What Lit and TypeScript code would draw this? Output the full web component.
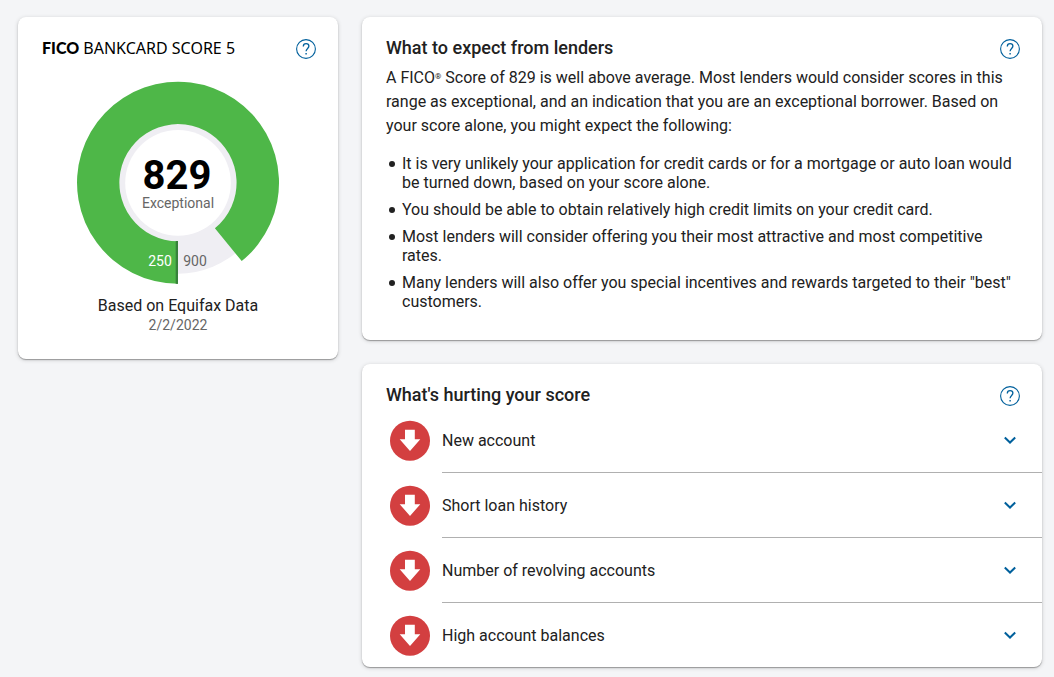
import { LitElement, html, css, svg } from "lit";
import { customElement, property, state } from "lit/decorators.js";

@customElement("help-button")
class HelpButton extends LitElement {
  @property() label = "Help";

  static styles = css`
    :host {
      display: block;
      flex: none;
    }
    .help {
      display: block;
      width: 24px;
      height: 24px;
      padding: 0;
      border: 0;
      background: none;
      color: #00609c;
      cursor: pointer;
    }
    .glyph {
      display: block;
    }
  `;

  render() {
    return html`<button class="help" type="button" aria-label=${this.label}>
      <svg class="glyph" width="24" height="24" viewBox="0 0 24 24" fill="none" stroke="currentColor">
        <circle cx="12" cy="12" r="9.4" stroke-width="1.1" />
        <path d="M9.3 9.4C9.3 7.6 10.4 6.6 12.1 6.6C13.8 6.6 14.9 7.6 14.9 9.1C14.9 11.4 12.1 11.5 12.1 14.3" stroke-width="1.3" />
        <path d="M12.1 16V17.5" stroke-width="1.4" />
      </svg>
    </button>`;
  }
}

@customElement("score-gauge")
class ScoreGauge extends LitElement {
  @property({ type: Number }) score = 829;
  @property() rating = "Exceptional";

  static styles = css`
    :host {
      display: block;
    }
    .gauge {
      display: block;
      margin: 0 auto;
      font-family: Roboto, sans-serif;
      text-anchor: middle;
    }
    .score {
      font-size: 40px;
      font-weight: 700;
      fill: #000;
    }
    .rating {
      font-size: 14px;
      fill: #666;
    }
    .low {
      font-size: 14px;
      fill: #fff;
    }
    .high {
      font-size: 14px;
      fill: #666;
    }
  `;

  render() {
    return html`<svg class="gauge" width="204" height="204" viewBox="0 0 204 204" role="img" aria-label="Score ${this.score}">
      ${svg`
        <circle cx="102" cy="101.7" r="91" fill="#efeef3" />
        <path fill="#4eb748" d="M102 202.7A101 101 0 1 1 165.7 180.1L138.9 147.2A58.6 58.6 0 1 0 102 160.3Z" />
        <rect x="99.7" y="160" width="2.3" height="42.8" fill="#37823a" />
        <circle cx="102" cy="101.9" r="52.8" fill="#fff" />
        <text class="score" x="101" y="108">${this.score}</text>
        <text class="rating" x="102" y="127">${this.rating}</text>
        <text class="low" x="84" y="185">250</text>
        <text class="high" x="119" y="185">900</text>
      `}
    </svg>`;
  }
}

@customElement("app-root")
class AppRoot extends LitElement {
  @state() private factors = [
    "New account",
    "Short loan history",
    "Number of revolving accounts",
    "High account balances",
  ];

  @state() private expectations = [
    "It is very unlikely your application for credit cards or for a mortgage or auto loan would be turned down, based on your score alone.",
    "You should be able to obtain relatively high credit limits on your credit card.",
    "Most lenders will consider offering you their most attractive and most competitive rates.",
    'Many lenders will also offer you special incentives and rewards targeted to their "best" customers.',
  ];

  static styles = css`
    :host {
      display: block;
      box-sizing: border-box;
      min-height: 100vh;
      background: #f4f5f7;
      color: #212121;
      font: 400 16px/24px Roboto, sans-serif;
    }
    .page {
      display: grid;
      grid-template-columns: 320px minmax(0, 1fr);
      align-items: start;
      gap: 24px;
      padding: 17px 12px 9px 18px;
    }
    .column {
      display: grid;
      gap: 24px;
    }
    .card {
      background: #fff;
      border-radius: 8px;
      box-shadow: 0 1px 1px rgba(0, 0, 0, 0.3), 0 1px 4px rgba(0, 0, 0, 0.18);
    }
    .head {
      display: flex;
      justify-content: space-between;
      align-items: flex-start;
      padding: 20px 20px 0 24px;
    }
    .title {
      margin: 0;
      font-size: 18px;
      font-weight: 500;
      line-height: 22px;
    }
    .product {
      margin: 0;
      color: #000;
      font: 400 16px/22px "Noto Sans", sans-serif;
    }
    .brand {
      font: 900 16px/22px Lato, sans-serif;
    }
    .summary {
      padding-bottom: 25px;
      text-align: center;
    }
    .gauge {
      margin: 20px 0 11px;
    }
    .source {
      margin: 0;
      line-height: 20px;
    }
    .date {
      margin: 0;
      color: #666;
      font-size: 14px;
      line-height: 18px;
    }
    .intro {
      margin: 0;
      padding: 5px 24px 0;
    }
    .mark {
      font-size: 8px;
      line-height: 8px;
      vertical-align: 4px;
    }
    .points {
      display: grid;
      gap: 8px;
      margin: 0;
      padding: 16px 24px 29px 27px;
      line-height: 19px;
      list-style: none;
    }
    .point {
      display: flex;
      gap: 7px;
    }
    .point::before {
      content: "";
      flex: none;
      width: 6px;
      height: 6px;
      margin-top: 7px;
      border-radius: 50%;
      background: currentColor;
    }
    .factors {
      margin: 0;
      padding: 0;
      list-style: none;
    }
    .factor {
      display: flex;
      align-items: flex-start;
      gap: 12px;
      width: 100%;
      padding: 0 0 0 28px;
      border: 0;
      background: none;
      color: inherit;
      font: inherit;
      text-align: left;
      cursor: pointer;
    }
    .arrow {
      flex: none;
      margin-top: 12px;
    }
    .line {
      display: flex;
      flex: 1;
      align-items: center;
      justify-content: space-between;
      height: 64px;
      padding-right: 20px;
      border-bottom: 1px solid #b0b0b0;
    }
    .name {
      padding-top: 2px;
    }
    .item:last-child .line {
      border-bottom: 0;
    }
  `;

  render() {
    return html`<main class="page">
      <section class="card summary">
        <header class="head">
          <h2 class="product"><span class="brand">FICO</span> BANKCARD SCORE 5</h2>
          <help-button label="About this score"></help-button>
        </header>
        <score-gauge class="gauge" score="829"></score-gauge>
        <p class="source">Based on Equifax Data</p>
        <p class="date">2/2/2022</p>
      </section>
      <div class="column">
        <section class="card">
          <header class="head">
            <h2 class="title">What to expect from lenders</h2>
            <help-button label="About lenders"></help-button>
          </header>
          <p class="intro">
            A FICO<span class="mark">®</span> Score of 829 is well above average. Most lenders would consider scores in
            this range as exceptional, and an indication that you are an exceptional borrower. Based on your score
            alone, you might expect the following:
          </p>
          <ul class="points">
            ${this.expectations.map((text) => html`<li class="point"><span>${text}</span></li>`)}
          </ul>
        </section>
        <section class="card">
          <header class="head">
            <h2 class="title">What's hurting your score</h2>
            <help-button label="About score factors"></help-button>
          </header>
          <ul class="factors">
            ${this.factors.map(
              (name) => html`<li class="item">
                <button class="factor" type="button" aria-expanded="false">
                  <svg class="arrow" width="40" height="41" viewBox="0 0 40 41" aria-hidden="true">
                    <circle cx="20" cy="20.7" r="20" fill="#d33f40" />
                    <path d="M15 9.8H24.8V19.2H30.3L20 31L9.7 19.2H15Z" fill="#fff" />
                  </svg>
                  <span class="line">
                    <span class="name">${name}</span>
                    <svg width="24" height="24" viewBox="0 0 24 24" fill="none" aria-hidden="true">
                      <path d="M6.8 9.5L12 14.5L17.2 9.5" stroke="#00609c" stroke-width="2" />
                    </svg>
                  </span>
                </button>
              </li>`
            )}
          </ul>
        </section>
      </div>
    </main>`;
  }
}
